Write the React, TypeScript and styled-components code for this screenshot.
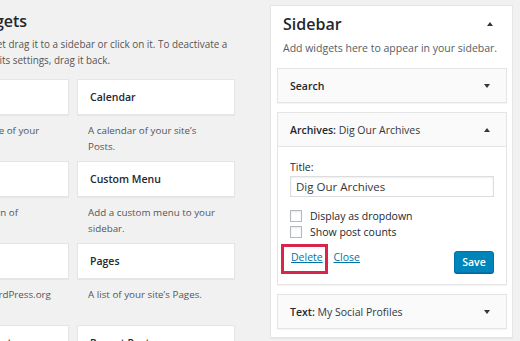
import React from "react";
import styled, { createGlobalStyle } from "styled-components";

const Global = createGlobalStyle`
  * { box-sizing: border-box; }
  html, body { margin: 0; padding: 0; }
  body {
    background: #f1f1f1;
    font-family: "Open Sans", "Noto Sans", sans-serif;
    color: #23282d;
    width: 520px;
    height: 341px;
    overflow: hidden;
  }
`;

const Page = styled.div`
  display: flex;
  align-items: flex-start;
  width: 520px;
  height: 341px;
  overflow: hidden;
`;

const LeftPane = styled.div`
  width: 262px;
  height: 341px;
  overflow: hidden;
  flex: none;
`;

const LeftInner = styled.div`
  margin-left: -89px;
  width: 340px;
`;

const Heading = styled.h2`
  margin: 11px 0 0 -20px;
  font-size: 16px;
  line-height: 20px;
  font-weight: 600;
  color: #23282d;
  white-space: nowrap;
`;

const Intro = styled.p`
  margin: 5px 0 0 4px;
  width: 322px;
  font-size: 9.9px;
  line-height: 16px;
  color: #555;
`;

const Grid = styled.div`
  display: grid;
  grid-template-columns: 158px 158px;
  grid-auto-rows: 82px;
  column-gap: 8px;
  margin-top: 11px;
`;

const Item = styled.div`
  display: flex;
  flex-direction: column;
`;

const Card = styled.div`
  height: 36px;
  background: #fff;
  border: 1px solid #e5e5e5;
  box-shadow: 0 1px 1px rgba(0, 0, 0, 0.04);
  display: flex;
  align-items: center;
  padding: 0 12px;
  font-size: 10.5px;
  font-weight: 600;
  color: #23282d;
  white-space: nowrap;
`;

const ItemDesc = styled.div`
  margin-top: 8px;
  padding: 0 11px;
  font-size: 9.8px;
  line-height: 16px;
  color: #555;
`;

const Panel = styled.div`
  margin: 5px 0 0 8px;
  width: 243px;
  background: #fff;
  border: 1px solid #e5e5e5;
  box-shadow: 0 1px 1px rgba(0, 0, 0, 0.04);
  padding: 0 5px 8px 6px;
  display: flex;
  flex-direction: column;
  flex: none;
`;

const PanelHead = styled.div`
  display: flex;
  align-items: center;
  justify-content: space-between;
  padding: 8px 14px 0 6px;
`;

const PanelTitle = styled.h2`
  margin: 0;
  font-size: 16px;
  line-height: 20px;
  font-weight: 600;
  color: #23282d;
`;

const PanelDesc = styled.p`
  margin: 6px 0 12px 6px;
  font-size: 10.5px;
  line-height: 16px;
  color: #555d66;
`;

const Stack = styled.div`
  display: flex;
  flex-direction: column;
  gap: 9px;
`;

const Widget = styled.div`
  border: 1px solid #e5e5e5;
  background: #fafafa;
  box-shadow: 0 1px 1px rgba(0, 0, 0, 0.04);
`;

const WidgetHead = styled.div<{ $open?: boolean }>`
  height: ${(p) => (p.$open ? 34 : 33)}px;
  display: flex;
  align-items: center;
  justify-content: space-between;
  padding: 0 16px 0 12px;
  border-bottom: ${(p) => (p.$open ? "1px solid #e5e5e5" : "none")};
  font-size: 10.5px;
  color: #23282d;
  white-space: nowrap;
`;

const Strong = styled.span`
  font-weight: 600;
`;

const Sub = styled.span`
  font-weight: 400;
  color: #32373c;
`;

const Arrow = styled.span<{ $up?: boolean }>`
  width: 0;
  height: 0;
  border-left: 3.5px solid transparent;
  border-right: 3.5px solid transparent;
  ${(p) =>
    p.$up
      ? "border-bottom: 4px solid #32373c;"
      : "border-top: 4px solid #32373c;"}
`;

const WidgetBody = styled.div`
  background: #fff;
  padding: 12px 12px 11px;
`;

const Label = styled.div`
  font-size: 10.5px;
  line-height: 16px;
  color: #23282d;
`;

const Input = styled.div`
  margin-top: 1px;
  height: 21px;
  border: 1px solid #ddd;
  box-shadow: inset 0 1px 2px rgba(0, 0, 0, 0.07);
  display: flex;
  align-items: center;
  padding: 0 5px;
  font-size: 11.5px;
  color: #32373c;
`;

const Checks = styled.div`
  margin-top: 11px;
  display: flex;
  flex-direction: column;
`;

const CheckRow = styled.label`
  height: 16px;
  display: flex;
  align-items: center;
  gap: 8px;
  font-size: 10.5px;
  color: #23282d;
`;

const Box = styled.span`
  width: 12px;
  height: 12px;
  border: 1px solid #b4b9be;
  background: #fff;
  box-shadow: inset 0 1px 2px rgba(0, 0, 0, 0.1);
`;

const Actions = styled.div`
  margin-top: 11px;
  display: flex;
  align-items: flex-start;
  justify-content: space-between;
  height: 22px;
`;

const Links = styled.div`
  display: flex;
  align-items: center;
  margin-top: -2px;
  padding: 0 0 0 1px;
  font-size: 10.5px;
  line-height: 16px;
`;

const Link = styled.a`
  position: relative;
  display: inline-block;
  line-height: 16px;
  color: #0073aa;
  text-decoration: underline;
`;

const Sep = styled.span`
  color: #e2e4e7;
  margin: 0 3px 0 2px;
`;

const Highlight = styled.span`
  position: absolute;
  left: -10px;
  top: -5px;
  width: 47px;
  height: 30px;
  border: 3px solid #d9244c;
  pointer-events: none;
`;

const SaveButton = styled.button`
  width: 40px;
  height: 22px;
  padding: 0;
  background: #0085ba;
  border: 1px solid #0073aa;
  border-radius: 3px;
  box-shadow: 0 1px 0 #006799;
  color: #fff;
  font-family: "Open Sans", sans-serif;
  font-size: 10.5px;
  font-weight: 600;
`;

const left = [
  { t: "Archives", d: "A monthly archive of your site\u2019s Posts." },
  { t: "Calendar", d: "A calendar of your site\u2019s Posts." },
  { t: "Categories", d: "A list or dropdown of categories." },
  { t: "Custom Menu", d: "Add a custom menu to your sidebar." },
  { t: "Meta", d: "Login, RSS, & WordPress.org links." },
  { t: "Pages", d: "A list of your site\u2019s Pages." },
  { t: "Recent Comments", d: "Your site\u2019s most recent comments." },
  { t: "Recent Posts", d: "Your site\u2019s most recent Posts." },
];

export default function App() {
  return (
    <>
      <Global />
      <Page>
        <LeftPane>
          <LeftInner>
            <Heading>Available Widgets</Heading>
            <Intro>
              To activate a widget drag it to a sidebar or click on it. To deactivate a widget and
              delete its settings, drag it back.
            </Intro>
            <Grid>
              {left.map((w) => (
                <Item key={w.t}>
                  <Card>{w.t}</Card>
                  <ItemDesc>{w.d}</ItemDesc>
                </Item>
              ))}
            </Grid>
          </LeftInner>
        </LeftPane>
        <Panel>
          <PanelHead>
            <PanelTitle>Sidebar</PanelTitle>
            <Arrow $up />
          </PanelHead>
          <PanelDesc>Add widgets here to appear in your sidebar.</PanelDesc>
          <Stack>
            <Widget>
              <WidgetHead>
                <Strong>Search</Strong>
                <Arrow />
              </WidgetHead>
            </Widget>
            <Widget>
              <WidgetHead $open>
                <span>
                  <Strong>Archives:</Strong> <Sub>Dig Our Archives</Sub>
                </span>
                <Arrow $up />
              </WidgetHead>
              <WidgetBody>
                <Label>Title:</Label>
                <Input>Dig Our Archives</Input>
                <Checks>
                  <CheckRow>
                    <Box />
                    Display as dropdown
                  </CheckRow>
                  <CheckRow>
                    <Box />
                    Show post counts
                  </CheckRow>
                </Checks>
                <Actions>
                  <Links>
                    <Link href="#">
                      Delete
                      <Highlight />
                    </Link>
                    <Sep>|</Sep>
                    <Link href="#">Close</Link>
                  </Links>
                  <SaveButton>Save</SaveButton>
                </Actions>
              </WidgetBody>
            </Widget>
            <Widget>
              <WidgetHead>
                <span>
                  <Strong>Text:</Strong> <Sub>My Social Profiles</Sub>
                </span>
                <Arrow />
              </WidgetHead>
            </Widget>
          </Stack>
        </Panel>
      </Page>
    </>
  );
}
